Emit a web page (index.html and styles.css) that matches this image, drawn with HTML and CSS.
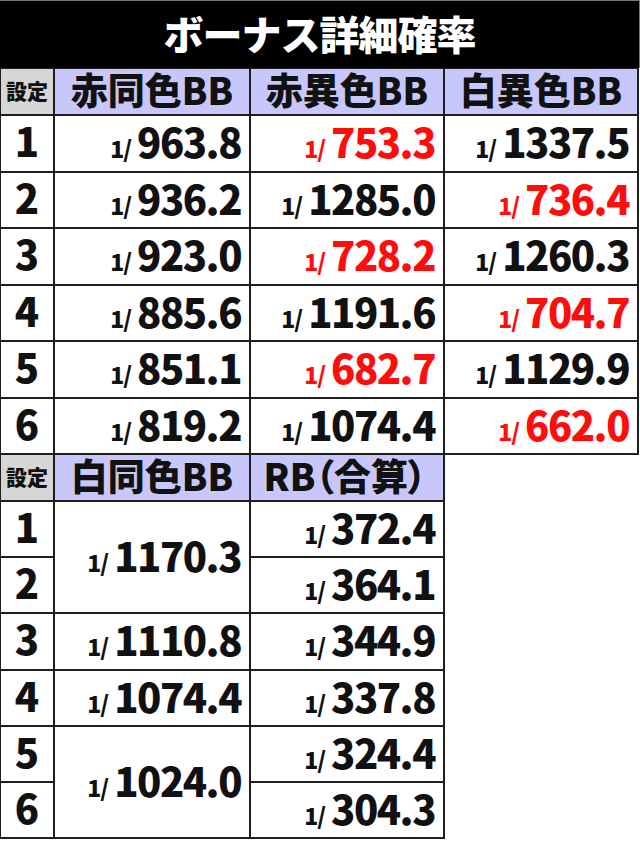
FILE: index.html
```html
<!DOCTYPE html>
<html lang="ja">
<head>
<meta charset="utf-8">
<title>ボーナス詳細確率</title>
<link rel="stylesheet" href="styles.css">
</head>
<body>
<div class="page">
  <div class="title">ボーナス詳細確率</div>

  <div class="grid t1">
    <div class="cell lab">設定</div>
    <div class="cell head">赤同色BB</div>
    <div class="cell head">赤異色BB</div>
    <div class="cell head">白異色BB</div>

    <div class="cell set">1</div>
    <div class="cell num"><span class="val"><span class="pre">1/</span><span class="big">963.8</span></span></div>
    <div class="cell num red"><span class="val"><span class="pre">1/</span><span class="big">753.3</span></span></div>
    <div class="cell num"><span class="val"><span class="pre">1/</span><span class="big">1337.5</span></span></div>

    <div class="cell set">2</div>
    <div class="cell num"><span class="val"><span class="pre">1/</span><span class="big">936.2</span></span></div>
    <div class="cell num"><span class="val"><span class="pre">1/</span><span class="big">1285.0</span></span></div>
    <div class="cell num red"><span class="val"><span class="pre">1/</span><span class="big">736.4</span></span></div>

    <div class="cell set">3</div>
    <div class="cell num"><span class="val"><span class="pre">1/</span><span class="big">923.0</span></span></div>
    <div class="cell num red"><span class="val"><span class="pre">1/</span><span class="big">728.2</span></span></div>
    <div class="cell num"><span class="val"><span class="pre">1/</span><span class="big">1260.3</span></span></div>

    <div class="cell set">4</div>
    <div class="cell num"><span class="val"><span class="pre">1/</span><span class="big">885.6</span></span></div>
    <div class="cell num"><span class="val"><span class="pre">1/</span><span class="big">1191.6</span></span></div>
    <div class="cell num red"><span class="val"><span class="pre">1/</span><span class="big">704.7</span></span></div>

    <div class="cell set">5</div>
    <div class="cell num"><span class="val"><span class="pre">1/</span><span class="big">851.1</span></span></div>
    <div class="cell num red"><span class="val"><span class="pre">1/</span><span class="big">682.7</span></span></div>
    <div class="cell num"><span class="val"><span class="pre">1/</span><span class="big">1129.9</span></span></div>

    <div class="cell set">6</div>
    <div class="cell num"><span class="val"><span class="pre">1/</span><span class="big">819.2</span></span></div>
    <div class="cell num"><span class="val"><span class="pre">1/</span><span class="big">1074.4</span></span></div>
    <div class="cell num red"><span class="val"><span class="pre">1/</span><span class="big">662.0</span></span></div>
  </div>

  <div class="grid t2">
    <div class="cell lab">設定</div>
    <div class="cell head">白同色BB</div>
    <div class="cell head rb">RB（合算）</div>

    <div class="cell set">1</div>
    <div class="cell num span2"><span class="val"><span class="pre">1/</span><span class="big">1170.3</span></span></div>
    <div class="cell num"><span class="val"><span class="pre">1/</span><span class="big">372.4</span></span></div>

    <div class="cell set">2</div>
    <div class="cell num"><span class="val"><span class="pre">1/</span><span class="big">364.1</span></span></div>

    <div class="cell set">3</div>
    <div class="cell num"><span class="val"><span class="pre">1/</span><span class="big">1110.8</span></span></div>
    <div class="cell num"><span class="val"><span class="pre">1/</span><span class="big">344.9</span></span></div>

    <div class="cell set">4</div>
    <div class="cell num"><span class="val"><span class="pre">1/</span><span class="big">1074.4</span></span></div>
    <div class="cell num"><span class="val"><span class="pre">1/</span><span class="big">337.8</span></span></div>

    <div class="cell set">5</div>
    <div class="cell num span2"><span class="val"><span class="pre">1/</span><span class="big">1024.0</span></span></div>
    <div class="cell num"><span class="val"><span class="pre">1/</span><span class="big">324.4</span></span></div>

    <div class="cell set">6</div>
    <div class="cell num"><span class="val"><span class="pre">1/</span><span class="big">304.3</span></span></div>
  </div>
</div>
</body>
</html>
```

FILE: styles.css
```css
html, body {
  margin: 0;
  padding: 0;
  background: #ffffff;
}

body {
  font-family: "Noto Sans CJK JP", "Noto Sans", sans-serif;
  font-weight: 900;
  color: #111111;
}

.page {
  width: 640px;
  height: 841px;
  overflow: hidden;
}

.title {
  height: 67px;
  width: 639px;
  background: #000000;
  border-top: 1px solid #7a7a7a;
  border-right: 1px solid #7a7a7a;
  color: #ffffff;
  font-size: 40px;
  line-height: 64px;
  text-align: center;
  letter-spacing: -1px;
}

.grid {
  display: grid;
  gap: 2px;
  background: #1e1e1e;
  width: fit-content;
}

.t1 {
  padding: 1px 2px 2px 1px;
  grid-template-columns: 52px 194px 192px 192px;
  grid-template-rows: 45px repeat(6, 54.5px);
}

.t2 {
  padding: 0 2px 2px 1px;
  grid-template-columns: 52px 194px 192px;
  grid-template-rows: 45px repeat(6, 54.2px);
}

.cell {
  background: #ffffff;
  display: flex;
  align-items: center;
  line-height: 1;
}

.lab {
  background: #d6d6d6;
  justify-content: center;
  font-size: 21px;
  padding-bottom: 3px;
}

.head {
  background: #c7c7fc;
  justify-content: center;
  font-size: 37px;
  padding-bottom: 5px;
}

.rb {
  font-feature-settings: "palt";
  padding-right: 4px;
}

.set {
  justify-content: center;
  font-size: 40px;
  padding-bottom: 6px;
}

.num {
  justify-content: flex-end;
  padding-right: 8px;
  padding-bottom: 4px;
}

.val {
  display: inline-block;
  white-space: nowrap;
}

.pre {
  font-size: 23px;
  letter-spacing: -1px;
  margin-right: 6px;
}

.big {
  font-size: 40px;
  letter-spacing: -1.5px;
}

.red {
  color: #ff0d0d;
}

.span2 {
  grid-row: span 2;
}
```
